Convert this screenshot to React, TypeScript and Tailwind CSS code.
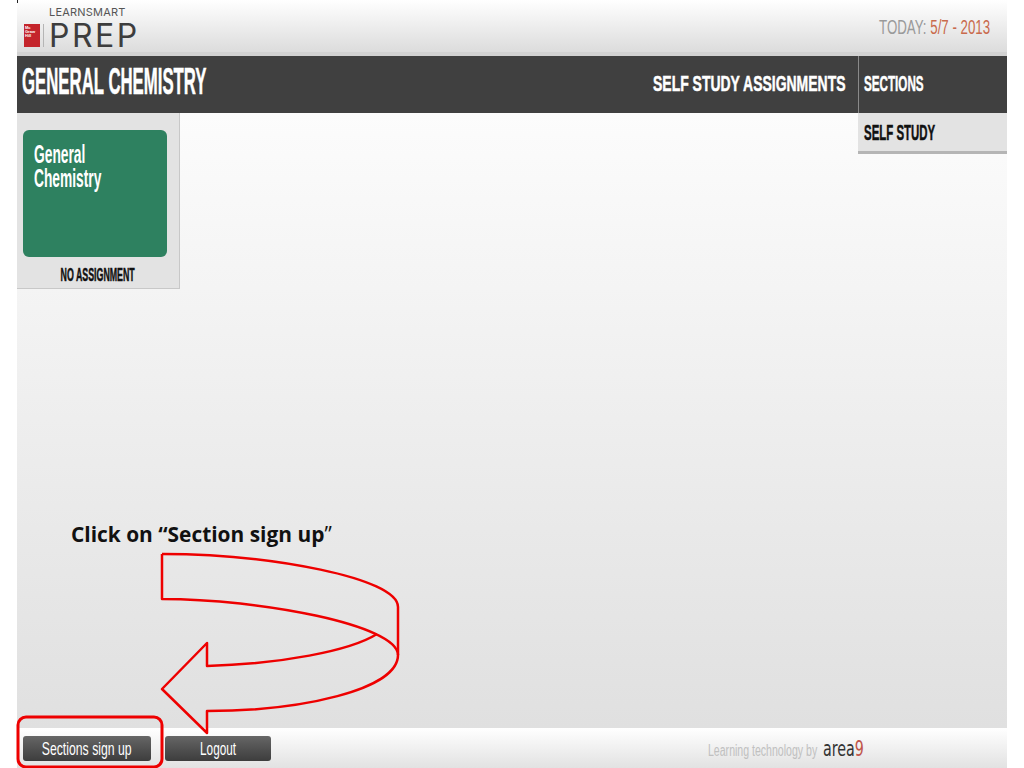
export default function App() {
  const sans = "block whitespace-nowrap [font-family:'Liberation_Sans',sans-serif]";
  const heavy = "[-webkit-text-stroke:0.5px_currentColor]";
  return (
    <div className="relative h-[768px] w-[1024px] overflow-hidden bg-white [font-family:'Liberation_Sans',sans-serif]">
      <div className="ml-[17px] flex h-full w-[990px] flex-col">
        <header className="flex h-[52px] shrink-0 items-start justify-between bg-gradient-to-b from-white to-[#dcdcdc]">
          <div className="flex items-end pl-[7px] pt-[24px]">
            <div className="flex h-[23px] w-[16px] flex-col bg-[#c4242b] pl-[1px] pt-[2px] text-[4px] font-bold leading-[4px] text-white">
              <span>Mc</span>
              <span>Graw</span>
              <span>Hill</span>
            </div>
            <div className="ml-[3px] h-[23px] w-px bg-[#b5b5b5]" />
            <div className="relative ml-[5px] h-[23px] w-[90px]">
              <span className="absolute left-0 top-[-18px] whitespace-nowrap text-[11px] leading-[12px] tracking-[0.2px] text-[#555] [font-family:'Inter',sans-serif]">LEARNSMART</span>
              <span className="absolute left-0 top-[-6px] text-[32px] font-normal leading-[36px] tracking-[2.5px] text-[#3d3d3d] [font-family:'Inter',sans-serif]">PREP</span>
            </div>
          </div>
          <div className="mr-[17px] flex w-[111px] justify-end pt-[16px]">
            <span className={`${sans} origin-right scale-x-[0.665] text-[20px] leading-[22px] text-[#9a9a9a]`}>
              TODAY: <span className="text-[#c96a4c]">5/7 - 2013</span>
            </span>
          </div>
        </header>
        <div className="h-[4px] shrink-0 bg-[#d2d2d2]" />
        <nav className="flex h-[57px] shrink-0 items-start bg-[#404040] text-white">
          <h1 className="ml-[5px] w-[189px] pt-[6px]">
            <span className={`${sans} ${heavy} origin-left scale-x-[0.466] text-[36px] font-bold leading-[40px]`}>GENERAL CHEMISTRY</span>
          </h1>
          <div className="ml-auto mr-[13px] w-[192px] pt-[15px]">
            <span className={`${sans} ${heavy} origin-left scale-x-[0.635] text-[22px] font-bold leading-[26px]`}>SELF STUDY ASSIGNMENTS</span>
          </div>
          <div className="h-[57px] w-[149px] border-l border-[#8a8a8a] pl-[5px] pt-[15px]">
            <span className={`${sans} ${heavy} origin-left scale-x-[0.53] text-[22px] font-bold leading-[26px]`}>SECTIONS</span>
          </div>
        </nav>
        <main className="flex min-h-0 flex-1 items-start justify-between bg-gradient-to-b from-[#fcfcfc] to-[#e0e0e0]">
          <section className="flex h-[176px] w-[163px] flex-col border-b border-r border-[#c8c8c8] bg-[#e3e3e3] px-[6px] pt-[17px]">
            <div className="h-[127px] w-[144px] rounded-[6px] bg-[#2e8160] px-[11px] pt-[12px] text-white">
              <span className={`${sans} origin-left scale-x-[0.53] text-[26px] font-bold leading-[24px]`}>General</span>
              <span className={`${sans} origin-left scale-x-[0.53] text-[26px] font-bold leading-[24px]`}>Chemistry</span>
            </div>
            <div className="flex justify-center pt-[8px]">
              <span className={`${sans} ${heavy} scale-x-[0.49] text-[18px] font-bold leading-[20px] text-[#111]`}>NO ASSIGNMENT</span>
            </div>
          </section>
          <div className="h-[41px] w-[149px] border-b-[3px] border-[#b5b5b5] bg-[#e3e3e3] pl-[6px] pt-[7px]">
            <span className={`${sans} ${heavy} origin-left scale-x-[0.52] text-[22px] font-bold leading-[26px] text-[#111]`}>SELF STUDY</span>
          </div>
        </main>
        <footer className="flex h-[40px] shrink-0 items-start bg-gradient-to-b from-white to-[#e2e2e2] pl-[6px] pt-[8px]">
          <button className="flex h-[25px] w-[128px] items-center justify-center rounded-[3px] bg-gradient-to-b from-[#666] to-[#3d3d3d] text-white">
            <span className={`${sans} scale-x-[0.645] text-[19px] leading-[25px]`}>Sections sign up</span>
          </button>
          <button className="ml-[14px] flex h-[25px] w-[106px] items-center justify-center rounded-[3px] bg-gradient-to-b from-[#666] to-[#3d3d3d] text-white">
            <span className={`${sans} scale-x-[0.62] text-[19px] leading-[25px]`}>Logout</span>
          </button>
          <div className="ml-[437px] flex items-baseline pt-[5px]">
            <span className={`${sans} w-[115px] origin-left scale-x-[0.66] text-[16px] leading-[16px] text-[#c0c0c0]`}>Learning technology by</span>
            <span className="block origin-left scale-x-[0.68] whitespace-nowrap text-[21px] leading-[16px] text-[#333] [font-family:'DejaVu_Sans',sans-serif]">area<span className="text-[#c0564a]">9</span></span>
          </div>
        </footer>
      </div>

      <div className="absolute left-[17px] top-0 h-[3px] w-px bg-[#222]" />
      <p className="absolute left-[71px] top-[521px] whitespace-nowrap text-[20.9px] font-bold leading-[26px] text-[#111] [font-family:'Open_Sans',sans-serif]">
        Click on “Section sign up<span className="font-normal">”</span>
      </p>
      <svg className="absolute left-0 top-0" width="1024" height="768" fill="none" stroke="#ee0000" strokeWidth="2.5" strokeLinejoin="round">
        <path d="M162 554 C270 554 398 578 398 607 L398 655 C398 690 300 711 207 711 L207 733 L162 689 L207 643 L207 666 C280 664 350 651 377 634" />
        <path d="M162 554 L162 599 C260 599 398 625 398 655" />
        <rect x="18" y="717" width="144" height="50" rx="8" strokeWidth="3" />
      </svg>
    </div>
  );
}
